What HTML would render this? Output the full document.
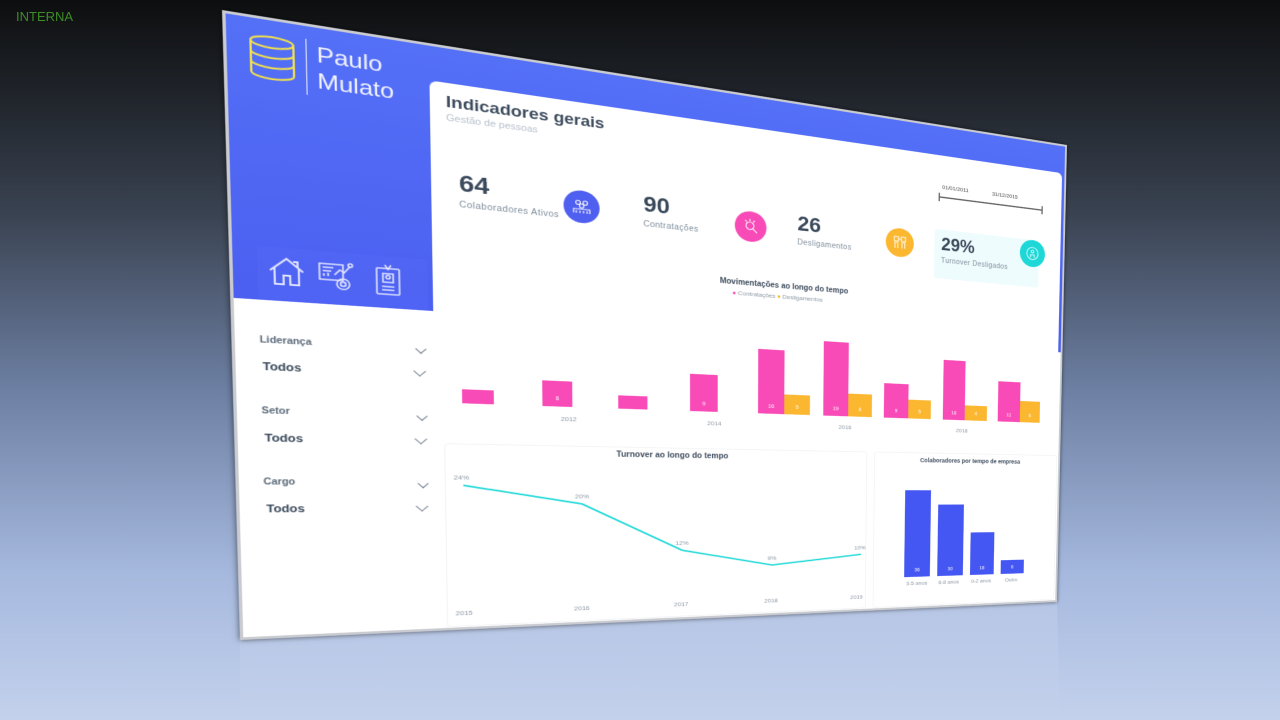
<!DOCTYPE html>
<html><head><meta charset="utf-8"><style>
*{margin:0;padding:0;box-sizing:border-box}
html,body{width:1280px;height:720px;overflow:hidden}
body{background:linear-gradient(180deg,#0d0e0f 0%,#1e2228 12%,#3a4352 30%,#6f82a6 55%,#a6b9de 80%,#c3d1ec 100%);font-family:"Liberation Sans",sans-serif;position:relative}
.int{position:absolute;left:16px;top:9px;color:#3d8c26;font-size:13px}
.refl{position:absolute;left:240px;top:602px;width:820px;height:118px;background:linear-gradient(180deg,rgba(235,240,250,.18),rgba(200,212,235,0));clip-path:polygon(0 38px,817px 0,820px 118px,0 118px)}
#p{position:absolute;left:0;top:0;width:1000px;height:700px;transform-origin:0 0;transform:matrix3d(1.25237,0.19036,0,0.00038179,0.039071,0.93560,0,0.000055636,0,0,1,0,222,10,0,1);background:#fff;border:3px solid #c9cbd0;box-shadow:0 0 6px rgba(0,0,0,.6);overflow:hidden}
.band{position:absolute;left:0;top:0;width:1000px;height:310px;background:linear-gradient(180deg,#5470f7,#4b5ff0)}
.card{position:absolute;left:187px;top:40px;width:803px;height:670px;background:#fff;border-radius:8px}
.a{position:absolute;white-space:nowrap}
.big{font-weight:bold;color:#3b4a5c;font-size:28px}
.lbl{color:#7d8c9b;font-size:10px;letter-spacing:.5px}
.circ{position:absolute;width:40px;height:40px;border-radius:50%}
.bar{position:absolute;bottom:275px}
.pk{background:#f94bb7}.or{background:#fcb731}
.bl{font-size:7px;color:#fff;text-align:center;position:absolute;bottom:6px;width:100%}
.yr{font-size:8px;color:#8a96a3}
.flt{color:#5a6878;font-size:10px;font-weight:bold}
.tod{color:#3b4a5c;font-size:12px;font-weight:bold}
.chev{position:absolute;width:8px;height:8px;border-right:1.5px solid #6a7686;border-bottom:1.5px solid #6a7686;transform:rotate(45deg)}
</style></head><body>
<div class="int">INTERNA</div>
<div class="refl"></div>
<div id="p">
<div class="band"></div>
<svg class="a" style="left:18px;top:16px" width="44" height="50" viewBox="0 0 44 50" fill="none" stroke="#f3e24a" stroke-width="2"><ellipse cx="22" cy="8" rx="19" ry="6"/><path d="M3 8v34c0 3.5 8.5 6 19 6s19-2.5 19-6V8M3 19c0 3.5 8.5 6 19 6s19-2.5 19-6M3 30c0 3.5 8.5 6 19 6s19-2.5 19-6"/></svg>
<div class="a" style="left:70px;top:14px;width:1px;height:62px;background:#dfe4ff"></div>
<div class="a" style="left:80px;top:16px;color:#f2f4ff;font-size:24px;line-height:29px">Paulo<br>Mulato</div>
<div class="a" style="left:22px;top:250px;width:160px;height:60px;background:rgba(90,110,255,.25)"></div>
<svg class="a" style="left:30px;top:258px" width="36" height="36" viewBox="0 0 36 36" fill="none" stroke="#e4e8ff" stroke-width="1.8"><path d="M3 18L18 4l15 14M7 15v18h8V23h6v10h8V15M24 7h4v6"/></svg>
<svg class="a" style="left:76px;top:258px" width="36" height="36" viewBox="0 0 36 36" fill="none" stroke="#e4e8ff" stroke-width="1.5"><rect x="2" y="6" width="22" height="18"/><path d="M5 10h10M5 14h8M6 20v-3M10 20v-4M16 18l5-6 4 3 6-8"/><circle cx="31" cy="6" r="2"/><circle cx="24" cy="28" r="6"/><circle cx="24" cy="28" r="2.5"/></svg>
<svg class="a" style="left:128px;top:258px" width="30" height="38" viewBox="0 0 30 38" fill="none" stroke="#e4e8ff" stroke-width="1.5"><rect x="4" y="6" width="22" height="30" rx="1"/><path d="M12 2l3 5 3-5"/><rect x="10" y="12" width="10" height="10"/><circle cx="15" cy="16" r="2"/><path d="M9 27h12M9 31h12"/></svg>
<div class="a flt" style="left:22px;top:350px">Liderança</div><div class="chev" style="left:170px;top:352px"></div>
<div class="a tod" style="left:24px;top:378px">Todos</div><div class="chev" style="left:168px;top:378px;width:9px;height:9px"></div>
<div class="a flt" style="left:22px;top:430px">Setor</div><div class="chev" style="left:170px;top:432px"></div>
<div class="a tod" style="left:24px;top:459px">Todos</div><div class="chev" style="left:168px;top:459px;width:9px;height:9px"></div>
<div class="a flt" style="left:22px;top:511px">Cargo</div><div class="chev" style="left:170px;top:513px"></div>
<div class="a tod" style="left:24px;top:540px">Todos</div><div class="chev" style="left:168px;top:540px;width:9px;height:9px"></div>

<div class="card"></div>
<div class="a" style="left:203px;top:52px;font-size:19px;font-weight:bold;color:#3e4c5e">Indicadores gerais</div>
<div class="a" style="left:203px;top:75px;font-size:11px;color:#b6c0cc">Gestão de pessoas</div>
<div class="a big" style="left:215px;top:140px">64</div>
<div class="a lbl" style="left:215px;top:176px">Colaboradores Ativos</div>
<div class="circ" style="left:325px;top:148px;background:#4f5ff0"></div>
<svg class="a" style="left:333px;top:156px" width="24" height="24" viewBox="0 0 24 24" fill="none" stroke="#fff" stroke-width="1.2"><circle cx="8" cy="7" r="2.5"/><circle cx="16" cy="7" r="2.5"/><circle cx="12" cy="11" r="2.5"/><path d="M3 20v-5h18v5M6 20v-3M10 20v-3M14 20v-3M18 20v-3"/></svg>
<div class="a big" style="left:415px;top:140px">90</div>
<div class="a lbl" style="left:415px;top:176px">Contratações</div>
<div class="circ" style="left:525px;top:150px;background:#f94bb7"></div>
<svg class="a" style="left:533px;top:158px" width="24" height="24" viewBox="0 0 24 24" fill="none" stroke="#fff" stroke-width="1.2"><circle cx="11" cy="11" r="5"/><path d="M15 15l5 5M11 2v3M5 4l2 2M17 4l-2 2"/></svg>
<div class="a big" style="left:605px;top:143px">26</div>
<div class="a lbl" style="left:605px;top:179px">Desligamentos</div>
<div class="circ" style="left:725px;top:150px;background:#fcb731"></div>
<svg class="a" style="left:733px;top:158px" width="24" height="24" viewBox="0 0 24 24" fill="none" stroke="#fff" stroke-width="1.2"><rect x="4" y="4" width="6" height="6"/><rect x="14" y="4" width="6" height="6"/><path d="M5 20v-8h4v8M15 20v-8h4v8M10 7h4"/></svg>
<div class="a" style="left:795px;top:145px;width:160px;height:70px;background:#eefcfd;border-radius:4px"></div>
<div class="a big" style="left:805px;top:152px;font-size:25px">29%</div>
<div class="a lbl" style="left:805px;top:184px">Turnover Desligados</div>
<div class="circ" style="left:925px;top:145px;background:#1ed8d8"></div>
<svg class="a" style="left:933px;top:153px" width="24" height="24" viewBox="0 0 24 24" fill="none" stroke="#fff" stroke-width="1.2"><circle cx="12" cy="12" r="9"/><circle cx="12" cy="9" r="2"/><path d="M9 18v-4h6v4"/></svg>
<div class="a" style="left:805px;top:80px;font-size:8px;color:#444">01/01/2011</div>
<div class="a" style="left:880px;top:80px;font-size:8px;color:#444">31/12/2015</div>
<div class="a" style="left:800px;top:98px;width:160px;height:2px;background:#666"></div>
<div class="a" style="left:800px;top:93px;width:2px;height:12px;background:#666"></div>
<div class="a" style="left:958px;top:93px;width:2px;height:12px;background:#666"></div>
<div class="a" style="left:480px;top:240px;width:220px;text-align:center;font-size:10px;font-weight:bold;color:#3e4c5e">Movimentações ao longo do tempo</div>
<div class="a" style="left:522px;top:255px;font-size:8px;color:#f94bb7">● <span style="color:#8a96a3">Contratações</span> <span style="color:#fcb731">●</span> <span style="color:#8a96a3">Desligamentos</span></div>
<div class="bar pk" style="left:215px;width:33px;height:17px"></div>
<div class="bar pk" style="left:300px;width:33px;height:32px"><div class="bl">6</div></div>
<div class="bar pk" style="left:385px;width:34px;height:17px"></div>
<div class="bar pk" style="left:470px;width:34px;height:49px"><div class="bl">9</div></div>
<div class="bar pk" style="left:555px;width:34px;height:87px"><div class="bl">16</div></div>
<div class="bar or" style="left:589px;width:34px;height:27px"><div class="bl">5</div></div>
<div class="bar pk" style="left:641px;width:34px;height:103px"><div class="bl">19</div></div>
<div class="bar or" style="left:675px;width:33px;height:32px"><div class="bl">6</div></div>
<div class="bar pk" style="left:725px;width:35px;height:49px"><div class="bl">9</div></div>
<div class="bar or" style="left:760px;width:33px;height:27px"><div class="bl">5</div></div>
<div class="bar pk" style="left:811px;width:33px;height:87px"><div class="bl">16</div></div>
<div class="bar or" style="left:844px;width:34px;height:22px"><div class="bl">4</div></div>
<div class="bar pk" style="left:895px;width:35px;height:60px"><div class="bl">11</div></div>
<div class="bar or" style="left:930px;width:32px;height:32px"><div class="bl">6</div></div>
<div class="a yr" style="left:320px;top:430px">2012</div>
<div class="a yr" style="left:491px;top:430px">2014</div>
<div class="a yr" style="left:662px;top:430px">2016</div>
<div class="a yr" style="left:831px;top:430px">2018</div>
<div class="a" style="left:196px;top:468px;width:506px;height:225px;border:1px solid #f0f2f5;border-radius:4px"></div>
<div class="a" style="left:340px;top:473px;width:220px;text-align:center;font-size:10px;font-weight:bold;color:#3e4c5e">Turnover ao longo do tempo</div>
<svg class="a" style="left:0;top:0" width="1000" height="700"><polyline points="215,519 343,542 460,604 574,627 695,615" fill="none" stroke="#1ed8d8" stroke-width="2"/></svg>
<div class="a yr" style="left:205px;top:505px">24%</div>
<div class="a yr" style="left:335px;top:528px">20%</div>
<div class="a yr" style="left:452px;top:590px">12%</div>
<div class="a yr" style="left:568px;top:613px">9%</div>
<div class="a yr" style="left:685px;top:601px">10%</div>
<div class="a yr" style="left:205px;top:672px">2015</div>
<div class="a yr" style="left:333px;top:672px">2016</div>
<div class="a yr" style="left:450px;top:672px">2017</div>
<div class="a yr" style="left:564px;top:672px">2018</div>
<div class="a yr" style="left:680px;top:672px">2019</div>
<div class="a" style="left:712px;top:468px;width:280px;height:225px;border:1px solid #f0f2f5;border-radius:4px"></div>
<div class="a" style="left:735px;top:474px;width:240px;text-align:center;font-size:8.5px;font-weight:bold;color:#3e4c5e">Colaboradores por tempo de empresa</div>
<div class="a" style="left:757px;top:523px;width:38px;height:127px;background:#4557f2"><div class="bl">36</div></div>
<div class="a" style="left:806px;top:544px;width:39px;height:106px;background:#4557f2"><div class="bl">30</div></div>
<div class="a" style="left:856px;top:586px;width:37px;height:64px;background:#4557f2"><div class="bl">18</div></div>
<div class="a" style="left:904px;top:629px;width:37px;height:21px;background:#4557f2"><div class="bl">6</div></div>
<div class="a yr" style="left:760px;top:655px">3-5 anos</div>
<div class="a yr" style="left:808px;top:655px">6-8 anos</div>
<div class="a yr" style="left:858px;top:655px">0-2 anos</div>
<div class="a yr" style="left:911px;top:655px">Outro</div>
</div>
</body></html>
